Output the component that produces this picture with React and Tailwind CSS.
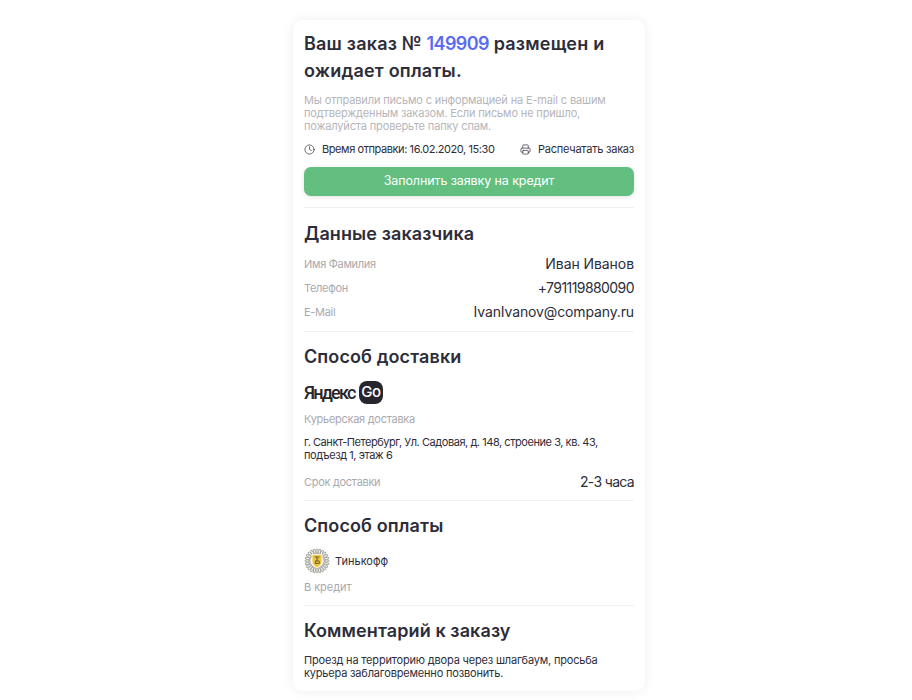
import React from "react";
import { Clock, Printer } from "lucide-react";

function Divider() {
  return <div className="h-px bg-[#f0f0f2]" />;
}

function Row({ label, value, valueClass }) {
  return (
    <div className="flex items-center justify-between h-[24px]">
      <span className="pt-[3px] text-[11px] text-[#a9a9ae] tracking-[-0.3px]">{label}</span>
      <span className={"text-[14px] text-[#2d2d3a] " + valueClass}>{value}</span>
    </div>
  );
}

function Heading({ children }) {
  return <h2 className="text-[18px] leading-[24px] font-semibold text-[#2d2d3a] tracking-[0.1px]">{children}</h2>;
}

function TinkoffLogo() {
  return (
    <svg width="26" height="26" viewBox="0 0 26 26">
      <circle cx="13" cy="13" r="12" fill="#f1f1ed" />
      <g stroke="#9a9c94" strokeWidth="0.8" fill="none">
        {Array.from({ length: 24 }).map((_, i) => {
          const a = (i * Math.PI) / 12;
          const cx = 13 + Math.cos(a) * 9.5;
          const cy = 13 + Math.sin(a) * 9.5;
          return (
            <ellipse
              key={i}
              cx={cx}
              cy={cy}
              rx="2.8"
              ry="1.1"
              transform={`rotate(${(i * 180) / 12} ${cx} ${cy})`}
            />
          );
        })}
      </g>
      <path d="M8 6.5h10v7c0 3-2.5 5-5 6.5-2.5-1.5-5-3.500-5-6.500z" fill="#efc73f" stroke="#ffffff" strokeWidth="0.8" />
      <path d="M10.500 9h5M13 9v4.500M11.500 13h3c1.300 0 1.300 2.500 0 2.500h-3z" stroke="#6b6238" strokeWidth="1.100" fill="none" />
    </svg>
  );
}

export default function App() {
  return (
    <div className="min-h-[700px] bg-white flex justify-center pl-[26px] pt-5 pb-[9px] font-['Inter','Noto_Sans',sans-serif]">
      <div className="w-[352px] rounded-[10px] bg-white shadow-[0_0_12px_rgba(40,40,60,0.08)] px-[11px] pt-[10px] flex flex-col">
        <h1 className="text-[18px] leading-[27px] font-semibold text-[#2d2d3a] tracking-[0.2px]">
          Ваш заказ № <span className="text-[#5a6cf0] tracking-[-0.6px]">149909</span> размещен и ожидает оплаты.
        </h1>
        <p className="mt-[10px] text-[11px] leading-[13px] text-[#b5b5ba] tracking-[-0.15px]">
          Мы отправили письмо с информацией на E-mail с вашим подтвержденным заказом. Если письмо не пришло, пожалуйста проверьте папку спам.
        </p>
        <div className="mt-[8px] flex items-center justify-between h-[16px] text-[11px] text-[#2d2d3a]">
          <span className="flex items-center gap-[7px] tracking-[-0.42px]">
            <Clock size={11} strokeWidth={1.5} />
            Время отправки: 16.02.2020, 15:30
          </span>
          <span className="flex items-center gap-[7px] tracking-[-0.24px]">
            <Printer size={11} strokeWidth={1.5} />
            Распечатать заказ
          </span>
        </div>
        <button className="mt-[10px] h-[29px] rounded-[7px] bg-[#62bf7f] text-white text-[12.5px] tracking-[-0.1px] shadow-[0_1px_4px_rgba(40,40,60,0.15)]">
          Заполнить заявку на кредит
        </button>
        <div className="mt-[11px]"><Divider /></div>

        <div className="mt-[14px]"><Heading>Данные заказчика</Heading></div>
        <div className="mt-[5px] flex flex-col">
          <Row label="Имя Фамилия" value="Иван Иванов" valueClass="tracking-[-0.07px]" />
          <Row label="Телефон" value="+791119880090" valueClass="tracking-[-0.57px]" />
          <Row label="E-Mail" value="IvanIvanov@company.ru" valueClass="tracking-[-0.13px]" />
        </div>
        <div className="mt-[8px]"><Divider /></div>

        <div className="mt-[13px]"><Heading>Способ доставки</Heading></div>
        <div className="mt-[11px] flex items-center h-[24px]">
          <span className="w-[52px] text-[18px] font-medium text-[#26262c] tracking-[-1.8px] font-['Roboto',sans-serif]">Яндекс</span>
          <span className="ml-[3px] w-[24px] h-[23px] rounded-[8px] bg-[#26262e] text-white text-[15px] font-medium flex items-center justify-center tracking-[-0.3px]">Go</span>
        </div>
        <p className="mt-[8px] text-[11px] leading-[14px] text-[#a9a9ae] tracking-[-0.28px]">Курьерская доставка</p>
        <p className="mt-[10px] text-[11px] leading-[13px] text-[#2d2d3a] tracking-[-0.45px]">
          г. Санкт-Петербург, Ул. Садовая, д. 148, строение 3, кв. 43, подъезд 1, этаж 6
        </p>
        <div className="mt-[7px]">
          <Row label="Срок доставки" value="2-3 часа" valueClass="tracking-[-0.67px]" />
        </div>
        <div className="mt-[7px]"><Divider /></div>

        <div className="mt-[13px]"><Heading>Способ оплаты</Heading></div>
        <div className="mt-[10px] flex items-center gap-[5px] h-[26px]">
          <TinkoffLogo />
          <span className="text-[11px] text-[#2d2d3a] tracking-[0px]">Тинькофф</span>
        </div>
        <p className="mt-[6px] text-[11px] leading-[14px] text-[#a9a9ae] tracking-[-0.05px]">В кредит</p>
        <div className="mt-[11px]"><Divider /></div>

        <div className="mt-[13px]"><Heading>Комментарий к заказу</Heading></div>
        <p className="mt-[11px] text-[11px] leading-[13px] text-[#2d2d3a] tracking-[-0.18px] pb-[10px]">
          Проезд на территорию двора через шлагбаум, просьба курьера заблаговременно позвонить.
        </p>
      </div>
    </div>
  );
}
